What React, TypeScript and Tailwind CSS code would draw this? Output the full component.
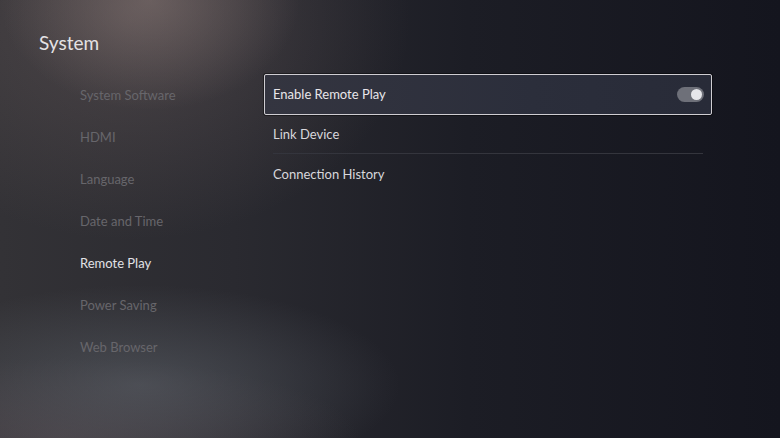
import React from 'react'

const menu = [
  'System Software',
  'HDMI',
  'Language',
  'Date and Time',
  'Remote Play',
  'Power Saving',
  'Web Browser',
]

function Toggle() {
  return (
    <div className="w-[27px] h-[15px] rounded-full bg-[#6e7079] flex items-center justify-end pr-[2px]">
      <div className="w-[11px] h-[11px] rounded-full bg-[#e6e6ea]" />
    </div>
  )
}

export default function App() {
  return (
    <div
      className="w-[780px] h-[438px] overflow-hidden font-['Lato',sans-serif] bg-[radial-gradient(ellipse_150px_110px_at_150px_0px,rgba(160,140,135,0.4),transparent),radial-gradient(ellipse_280px_220px_at_130px_20px,rgba(115,100,100,0.4),transparent),radial-gradient(ellipse_260px_100px_at_140px_385px,rgba(100,106,114,0.5),transparent),radial-gradient(ellipse_300px_80px_at_60px_438px,rgba(90,78,84,0.5),transparent),linear-gradient(90deg,#333236_0%,#2a2a30_30%,#1c1d25_60%,#14151e_100%)]"
    >
      <div className="pl-[39px] pt-[30px]">
        <h1 className="text-[19px] leading-[26px] text-[#e4e2e4]">System</h1>
      </div>

      <div className="flex mt-[18px]">
        {/* Left menu */}
        <ul className="w-[264px] pl-[80px] pt-[1px] flex flex-col">
          {menu.map((m) => (
            <li
              key={m}
              className={`h-[42px] flex items-center text-[13px] ${
                m === 'Remote Play' ? 'text-[#e2e2e6]' : 'text-[#67666b]'
              }`}
            >
              {m}
            </li>
          ))}
        </ul>

        {/* Right panel */}
        <div className="w-[448px] flex flex-col">
          <div className="h-[41px] border border-[#cfcdd2] rounded-[2px] bg-[linear-gradient(90deg,#343540,#2b2e3b_60%,#282b38)] flex items-center justify-between pl-[8px] pr-[7px] shadow-[0_0_0_1px_rgba(0,0,0,0.4)]">
            <span className="text-[13px] text-[#e8e6ea] pt-[1px]">Enable Remote Play</span>
            <Toggle />
          </div>
          <div className="mx-[9px]">
            <div className="h-[39px] pt-[2px] flex items-center text-[13px] text-[#d8d7dc] border-b border-[#34353d]">
              Link Device
            </div>
            <div className="h-[40px] pt-[2px] flex items-center text-[13px] text-[#d8d7dc]">
              Connection History
            </div>
          </div>
        </div>
      </div>
    </div>
  )
}
